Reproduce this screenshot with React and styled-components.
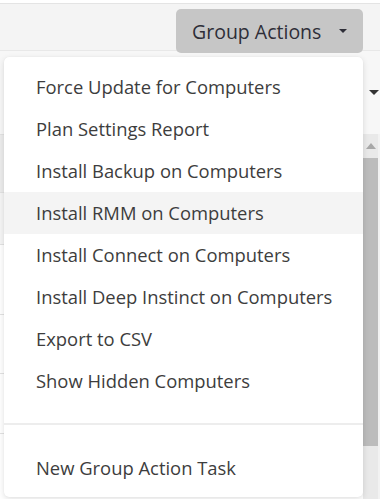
import React from "react";
import styled, { createGlobalStyle } from "styled-components";

const Global = createGlobalStyle`
  html, body { margin: 0; padding: 0; background: #fff; }
  body { font-family: "Open Sans", "Noto Sans", sans-serif; }
`;

const Page = styled.div`
  position: relative;
  width: 380px;
  height: 499px;
  overflow: hidden;
  background: #fff;
`;

const TopStrip = styled.div`
  height: 3px;
  background: #fff;
  border-bottom: 1px solid #e4e4e4;
`;

const Toolbar = styled.div`
  height: 47px;
  box-sizing: border-box;
  background: #f4f4f4;
  display: flex;
  justify-content: flex-end;
  align-items: flex-start;
  padding: 5px 17px 0 0;
  border-bottom: 1px solid #e8e8e8;
`;

const GroupButton = styled.button`
  width: 187px;
  height: 44px;
  box-sizing: border-box;
  border: none;
  border-radius: 5px;
  background: #c6c6c6;
  color: #2e2e38;
  font-family: inherit;
  font-size: 19.5px;
  display: flex;
  align-items: center;
  justify-content: space-between;
  padding: 0 16px 0 16px;
`;

const Caret = styled.span`
  width: 0;
  height: 0;
  border-left: ${(p) => p.$size}px solid transparent;
  border-right: ${(p) => p.$size}px solid transparent;
  border-top: ${(p) => p.$size}px solid ${(p) => p.$color};
`;

const FilterRow = styled.div`
  height: 83px;
  display: flex;
  justify-content: flex-end;
  align-items: center;
  padding-right: 1px;
  background: #f7f7f7;
`;

const Body = styled.div`
  display: flex;
  height: 365px;
`;

const Rows = styled.div`
  flex: 1;
  display: flex;
  flex-direction: column;
`;

const Row = styled.div`
  height: ${(p) => p.$h}px;
  flex: none;
  box-sizing: border-box;
  border-top: 1px solid #e2e2e2;
  background: ${(p) => p.$bg || "#fff"};
`;

const Scrollbar = styled.div`
  width: 17px;
  display: flex;
  flex-direction: column;
  align-items: flex-start;
  background: #f2f2f2;
`;

const Track = styled.div`
  width: 15px;
  flex: 1;
  background: #e9e9e9;
  display: flex;
  flex-direction: column;
  align-items: center;
`;

const ArrowUp = styled.span`
  margin-top: 9px;
  width: 0;
  height: 0;
  border-left: 5px solid transparent;
  border-right: 5px solid transparent;
  border-bottom: 6px solid #a8a8a8;
`;

const Thumb = styled.div`
  margin-top: 9px;
  width: 15px;
  height: 288px;
  background: #bcbcbc;
`;

const Menu = styled.ul`
  position: absolute;
  left: 4px;
  top: 57px;
  width: 359px;
  height: 440px;
  box-sizing: border-box;
  margin: 0;
  padding: 9px 0 8px;
  list-style: none;
  background: #fff;
  border-radius: 5px;
  box-shadow: 0 2px 6px rgba(0, 0, 0, 0.12), 0 0 1px rgba(0, 0, 0, 0.08);
`;

const Item = styled.li`
  height: 42px;
  line-height: 42px;
  padding-left: 32px;
  font-size: 18.4px;
  color: #3d3d3d;
  background: ${(p) => (p.$active ? "#f4f4f4" : "transparent")};
  white-space: nowrap;
`;

const Divider = styled.li`
  height: 2px;
  margin: 21px 0 22px;
  background: #ededed;
`;

const items = [
  "Force Update for Computers",
  "Plan Settings Report",
  "Install Backup on Computers",
  "Install RMM on Computers",
  "Install Connect on Computers",
  "Install Deep Instinct on Computers",
  "Export to CSV",
  "Show Hidden Computers",
];

const rows = [
  { h: 58, bg: "#ececec" },
  { h: 52, bg: "#f5f5f5" },
  { h: 70 },
  { h: 59 },
  { h: 60 },
  { h: 66 },
];

export default function App() {
  return (
    <Page>
      <Global />
      <TopStrip />
      <Toolbar>
        <GroupButton>
          Group Actions
          <Caret $size={4.5} $color="#2e2e38" />
        </GroupButton>
      </Toolbar>
      <FilterRow>
        <Caret $size={5} $color="#333" />
      </FilterRow>
      <Body>
        <Rows>
          {rows.map((r, i) => (
            <Row key={i} $h={r.h} $bg={r.bg} />
          ))}
        </Rows>
        <Scrollbar>
          <Track>
            <ArrowUp />
            <Thumb />
          </Track>
        </Scrollbar>
      </Body>
      <Menu>
        {items.map((t) => (
          <Item key={t} $active={t === "Install RMM on Computers"}>
            {t}
          </Item>
        ))}
        <Divider />
        <Item>New Group Action Task</Item>
      </Menu>
    </Page>
  );
}
